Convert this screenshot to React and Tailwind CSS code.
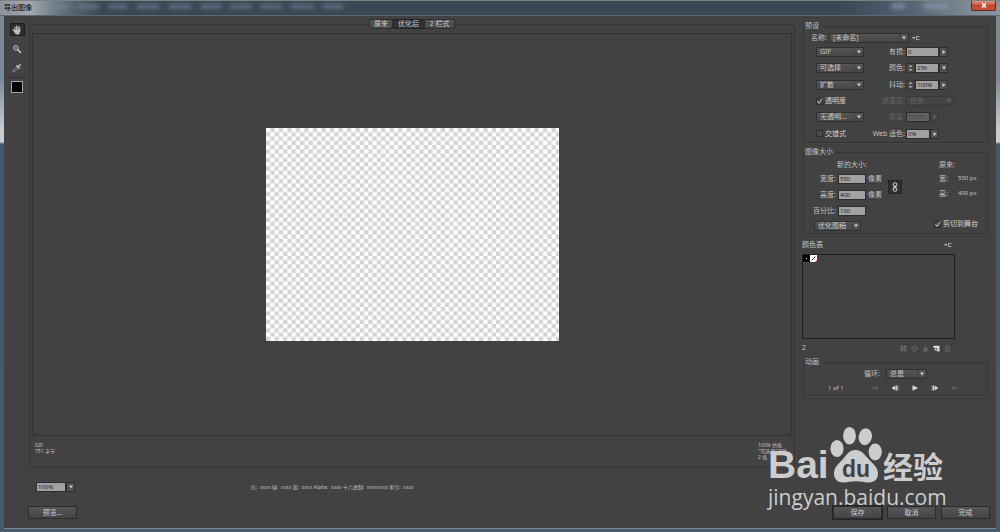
import React from "react";

const FIELD =
  "h-[10px] min-w-0 border border-[#2c2c2c] bg-[#a2a2a2] px-px font-['Open_Sans'] text-[6px] leading-[8px] text-[#151515] outline-none disabled:bg-[#606060] disabled:text-[#484848]";
const BUTTON =
  "flex h-[13px] w-[49px] items-center justify-center border border-[#2b2b2b] bg-linear-to-b from-[#565656] to-[#454545] leading-none text-[#cfcfcf]";

function Select({ id, label, value, className, disabled }) {
  return (
    <span className={`relative inline-flex h-[10px] ${className}`}>
      <select
        id={id}
        aria-label={label}
        disabled={disabled}
        className="h-full w-full appearance-none border border-[#303030] bg-linear-to-b from-[#555] to-[#474747] pl-[3px] text-[7px] leading-[8px] text-[#c8c8c8] outline-none disabled:border-[#393939] disabled:from-[#464646] disabled:to-[#424242] disabled:text-[#656565]"
      >
        <option>{value}</option>
      </select>
      <span
        className={`pointer-events-none absolute inset-y-px right-px flex w-[9px] items-center justify-center border-l ${disabled ? "border-[#404040] text-[#666]" : "border-[#424242] text-[#d0d0d0]"}`}
      >
        <Down />
      </span>
    </span>
  );
}

function Down() {
  return (
    <svg width="4" height="4" viewBox="0 0 4 4" fill="currentColor" aria-hidden="true">
      <path d="M0 .5h4L2 3.5z" />
    </svg>
  );
}

function Right() {
  return (
    <svg width="4" height="4" viewBox="0 0 4 4" fill="currentColor" aria-hidden="true">
      <path d="M.5 0v4L3.5 2z" />
    </svg>
  );
}

function ArrowButton({ label, down, disabled }) {
  return (
    <button
      type="button"
      aria-label={label}
      disabled={disabled}
      className="flex h-[10px] w-[9px] shrink-0 items-center justify-center border border-[#303030] bg-[#505050] text-[#cfcfcf] disabled:border-[#3a3a3a] disabled:bg-[#444] disabled:text-[#686868]"
    >
      {down ? <Down /> : <Right />}
    </button>
  );
}

function Spinner({ label }) {
  return (
    <button
      type="button"
      aria-label={label}
      className="flex h-[10px] w-[9px] shrink-0 items-center justify-center border border-[#333] bg-[#474747] text-[#cfcfcf]"
    >
      <svg width="5" height="8" viewBox="0 0 5 8" fill="currentColor" aria-hidden="true">
        <path d="M.7 2.8h3.6L2.5 1zM.7 5.2h3.6L2.5 7z" />
      </svg>
    </button>
  );
}

function Check({ label, checked }) {
  return (
    <label className="flex items-center gap-[2px] whitespace-nowrap text-[#d2d2d2]">
      <span className="relative flex size-[7px]">
        <input
          type="checkbox"
          defaultChecked={checked}
          className="peer size-[7px] appearance-none border border-[#2d2d2d] bg-[#4a4a4a]"
        />
        <svg
          className="pointer-events-none absolute inset-0 hidden size-[7px] overflow-visible peer-checked:block"
          viewBox="0 0 7 7"
          fill="none"
          stroke="#d8d8d8"
          strokeWidth=".9"
          aria-hidden="true"
        >
          <path d="M1.300 3.200l1.700 2L6.500.5" />
        </svg>
      </span>
      {label}
    </label>
  );
}

function MenuButton({ label }) {
  return (
    <button type="button" aria-label={label} className="flex h-[8px] w-[9px] items-center text-[#c4c4c4]">
      <svg width="9" height="6" viewBox="0 0 9 6" aria-hidden="true">
        <path d="M0 2h3.600L1.800 4z" fill="currentColor" />
        <path d="M4.500 1v4M4.500 1.500h3M4.500 4.500h3" stroke="currentColor" strokeWidth=".7" fill="none" />
      </svg>
    </button>
  );
}

function Group({ title, className, children }) {
  return (
    <fieldset className={`min-w-0 border border-[#353535] px-px shadow-[0_1px_0_#484848] ${className}`}>
      <legend className="pr-[3px] leading-[8px]">{title}</legend>
      {children}
    </fieldset>
  );
}

function OptionRow({ left, label, id, muted, children }) {
  return (
    <div className="grid grid-cols-[48px_42px_1fr] items-center">
      <div className="flex items-center">{left}</div>
      <label
        htmlFor={id}
        className={`flex justify-end pr-px whitespace-nowrap ${muted ? "text-[#626262]" : ""}`}
      >
        {label}
      </label>
      <div className="flex items-center">{children}</div>
    </div>
  );
}

function Presets() {
  return (
    <Group title="预设">
      <div className="flex h-[14px] items-center pt-[2px] pl-[6px]">
        <label htmlFor="preset" className="w-[18px] whitespace-nowrap">名称:</label>
        <Select id="preset" value="[未命名]" className="w-[80px]" />
        <span className="w-[3px]" />
        <MenuButton label="预设菜单" />
      </div>
      <div className="grid h-[98px] grid-rows-6 pl-[11px]">
        <OptionRow left={<Select label="格式" value="GIF" className="w-[48px]" />} label="有损:" id="lossy">
          <input id="lossy" defaultValue="0" className={`${FIELD} w-[33px]`} />
          <ArrowButton label="调整有损" />
        </OptionRow>
        <OptionRow left={<Select label="减色算法" value="可选择" className="w-[48px]" />} label="颜色:" id="colors">
          <Spinner label="颜色增减" />
          <input id="colors" defaultValue="256" className={`${FIELD} w-[24px]`} />
          <ArrowButton label="选择颜色数" down />
        </OptionRow>
        <OptionRow left={<Select label="仿色算法" value="扩散" className="w-[48px]" />} label="抖动:" id="dither">
          <Spinner label="抖动增减" />
          <input id="dither" defaultValue="100%" className={`${FIELD} w-[24px]`} />
          <ArrowButton label="调整抖动" />
        </OptionRow>
        <OptionRow left={<Check label="透明度" checked />} label="遮罩层:" id="matte" muted>
          <Select id="matte" value="白色" className="w-[48px]" disabled />
        </OptionRow>
        <OptionRow left={<Select label="透明仿色" value="无透明..." className="w-[48px]" />} label="数量:" id="amount" muted>
          <input id="amount" defaultValue="100%" disabled className={`${FIELD} w-[24px]`} />
          <ArrowButton label="调整数量" disabled />
        </OptionRow>
        <OptionRow left={<Check label="交错式" />} label="Web 适色:" id="websnap">
          <input id="websnap" defaultValue="0%" className={`${FIELD} w-[24px]`} />
          <ArrowButton label="调整 Web 适色" />
        </OptionRow>
      </div>
    </Group>
  );
}

function SizeRow({ id, label, value, unit }) {
  return (
    <div className="flex h-[16px] items-center">
      <label htmlFor={id} className="flex w-[33px] justify-end pr-[2px] whitespace-nowrap">{label}</label>
      <input id={id} defaultValue={value} className={`${FIELD} w-[28px]`} />
      <span className="pl-[2px]">{unit}</span>
    </div>
  );
}

function ImageSize() {
  return (
    <Group title="图像大小" className="mt-[5px]">
      <div className="flex h-[77px] pt-[2px]">
        <div className="w-[83px]">
          <div className="h-[13px] pl-[32px] leading-[13px]">新的大小:</div>
          <SizeRow id="width" label="宽度:" value="550" unit="像素" />
          <SizeRow id="height" label="高度:" value="400" unit="像素" />
          <SizeRow id="percent" label="百分比:" value="100" />
          <div className="flex h-[14px] items-center pl-[9px]">
            <Select label="品质" value="优化图稿" className="w-[47px]" />
          </div>
        </div>
        <button
          type="button"
          aria-label="约束比例"
          className="mt-[22px] flex h-[14px] w-[14px] items-center justify-center border border-[#242424] bg-[#303030] text-[#ddd]"
        >
          <svg width="6" height="10" viewBox="0 0 6 10" fill="none" stroke="currentColor" strokeWidth="1" aria-hidden="true">
            <rect x="1.2" y=".8" width="3.6" height="3.8" rx="1.6" />
            <rect x="1.2" y="5.4" width="3.6" height="3.8" rx="1.6" />
            <path d="M3 3.3v3.4" />
          </svg>
        </button>
        <div className="ml-auto flex flex-col pr-[8px]">
          <div className="h-[13px] pl-[5px] leading-[13px]">原来:</div>
          <dl className="grid grid-cols-[19px_auto] pl-[5px] leading-[15px]">
            <dt>宽:</dt>
            <dd className="text-[6px]">550 px</dd>
            <dt>高:</dt>
            <dd className="text-[6px]">400 px</dd>
          </dl>
          <div className="mt-auto pb-[5px]">
            <Check label="剪切到舞台" checked />
          </div>
        </div>
      </div>
    </Group>
  );
}

function ColorTable() {
  const icon = "flex size-[8px] items-center justify-center";
  return (
    <section className="mt-[6px] mr-[33px] -ml-px">
      <div className="flex h-[10px] items-center justify-between pr-[2px]">
        <h2>颜色表</h2>
        <MenuButton label="颜色表菜单" />
      </div>
      <div className="mt-[4px] flex h-[85px] items-start border border-[#202020]">
        <button type="button" aria-label="黑色" className="flex size-[7px] items-center justify-center bg-black">
          <span className="size-px bg-white" />
        </button>
        <button type="button" aria-label="透明" className="size-[7px] bg-white">
          <svg viewBox="0 0 7 7" className="size-[7px]" aria-hidden="true">
            <path d="M1.5 5.5l4-4" stroke="#222" strokeWidth=".9" />
            <path d="M7 5v2H5z" fill="#d22" />
          </svg>
        </button>
      </div>
      <div className="mt-[4px] flex h-[10px] items-center justify-between pr-[4px]">
        <span>2</span>
        <div className="flex items-center gap-[3px] text-[#666]">
          <button type="button" aria-label="映射为透明" className={icon}>
            <svg width="7" height="7" viewBox="0 0 7 7" aria-hidden="true">
              <rect x=".9" y=".9" width="5.2" height="5.2" fill="none" stroke="currentColor" strokeWidth=".7" />
              <path d="M1 1h2v2H1zM4 1h2v2H4zM2.5 2.5h2v2h-2zM1 4h2v2H1zM4 4h2v2H4z" fill="currentColor" />
            </svg>
          </button>
          <button type="button" aria-label="Web 转换" className={icon}>
            <svg width="7" height="7" viewBox="0 0 7 7" fill="none" stroke="currentColor" strokeWidth=".8" aria-hidden="true">
              <path d="M3.5.6l2.7 1.5v2.8L3.5 6.4.8 4.9V2.1zM.8 2.1l2.7 1.4 2.7-1.4M3.5 3.5v2.9" />
            </svg>
          </button>
          <button type="button" aria-label="锁定" className={icon}>
            <svg width="7" height="7" viewBox="0 0 7 7" aria-hidden="true">
              <path d="M1.5 3h4v3.5h-4z" fill="currentColor" />
              <path d="M2.3 3V1.9a1.2 1.2 0 0 1 2.4 0V3" fill="none" stroke="currentColor" strokeWidth=".8" />
            </svg>
          </button>
          <button type="button" aria-label="新建颜色" className={`${icon} text-[#dedede]`}>
            <svg width="7" height="7" viewBox="0 0 7 7" fill="currentColor" aria-hidden="true">
              <path d="M.5.8h6v5.7H4.3V3H.5z" />
              <path d="M.8 3.7h2.8v2.6z" />
            </svg>
          </button>
          <button type="button" aria-label="删除颜色" className={icon}>
            <svg width="7" height="7" viewBox="0 0 7 7" fill="none" stroke="currentColor" strokeWidth=".8" aria-hidden="true">
              <path d="M.8 1.9h5.4M2.5 1.8V.8h2v1M1.4 2v4.4h4.2V2M2.8 3v2.5M4.2 3v2.5" />
            </svg>
          </button>
        </div>
      </div>
    </section>
  );
}

const TRANSPORT = [
  { label: "第一帧", path: "M1.500.8h.8v4.400h-.8zM3 2.700h1v-.5L6.500.9v4.200L4 3.800v-.5H3z", off: true },
  { label: "上一帧", path: "M4.500 .6v4.800L.5 3zM5 .6h.9v4.800H5zM6.500 .6h.7v4.800h-.7z" },
  { label: "播放", path: "M1.500 .2v5.600L7 3z" },
  { label: "下一帧", path: "M3.500 .6v4.800L7.500 3zM.8 .6h.7v4.800H.8zM2.100 .6h.9v4.800h-.9z" },
  { label: "最后一帧", path: "M5.700.8h.8v4.400h-.8zM5 2.700H4v-.5L1.500.9v4.200L4 3.800v-.5h1z", off: true },
];

function Animation() {
  return (
    <Group title="动画" className="mt-[5px]">
      <div className="flex h-[15px] items-center pt-px pl-[59px]">
        <label htmlFor="loop" className="w-[22px] whitespace-nowrap">循环:</label>
        <Select id="loop" value="总是" className="w-[41px]" />
      </div>
      <div className="flex h-[14px] items-center pl-[23px]">
        <span className="w-[41px] text-[6px]">1 of 1</span>
        <div className="flex items-center gap-[8px]">
          {TRANSPORT.map((t) => (
            <button
              key={t.label}
              type="button"
              aria-label={t.label}
              className={`flex w-[12px] justify-center ${t.off ? "text-[#676767]" : "text-[#dadada]"}`}
            >
              <svg width="8" height="6" viewBox="0 0 8 6" fill="currentColor" aria-hidden="true">
                <path d={t.path} />
              </svg>
            </button>
          ))}
        </div>
      </div>
    </Group>
  );
}

function Toolbar() {
  return (
    <nav aria-label="工具" className="flex w-[25px] shrink-0 flex-col items-center pt-[7px] pl-px text-[#bdbdbd]">
      <button
        type="button"
        aria-label="抓手"
        className="flex h-[13px] w-[15px] items-center justify-center border border-[#1e1e1e] bg-[#2d2d2d]"
      >
        <svg width="10" height="10" viewBox="0 0 10 10" aria-hidden="true">
          <path
            d="M3 5.5V2M4.6 5V1M6.2 5V1.3M7.7 5.5V2.4M2.8 6.8L1 4.6"
            stroke="currentColor"
            strokeWidth="1.1"
            strokeLinecap="round"
          />
          <path d="M2.5 4.6h5.8v2L7 9.4H4L2.2 7z" fill="currentColor" />
        </svg>
      </button>
      <button type="button" aria-label="缩放" className="mt-[8px] flex size-[10px] items-center justify-center">
        <svg width="10" height="10" viewBox="0 0 10 10" aria-hidden="true">
          <circle cx="3.8" cy="3.8" r="2.5" fill="#6d6d6d" stroke="#a0a0a0" strokeWidth="1" />
          <path d="M5.900 5.900l2.500 2.500" stroke="currentColor" strokeWidth="1.7" strokeLinecap="round" />
        </svg>
      </button>
      <button type="button" aria-label="吸管" className="mt-[9px] flex size-[10px] items-center justify-center">
        <svg width="10" height="10" viewBox="0 0 10 10" aria-hidden="true">
          <path d="M1 9l.6-1.8L5.2 3.6l1.2 1.2-3.6 3.6z" fill="none" stroke="#999" strokeWidth=".8" />
          <path d="M4.9 2.900l2.300 2.300M6.200 3.800l2-2" stroke="currentColor" strokeWidth="1.6" strokeLinecap="round" />
        </svg>
      </button>
      <hr className="mt-[4px] w-[16px] border-[#333]" />
      <button type="button" aria-label="吸管颜色" className="mt-[3px] size-[12px] border border-[#a5a5a5] bg-black" />
    </nav>
  );
}

function Preview() {
  return (
    <section className="relative mt-[8px] flex min-w-0 flex-1 flex-col border border-[#373737] px-[2px] pt-[8px]">
      <div role="tablist" className="absolute -top-[6px] right-0 left-0 flex justify-center">
        <div className="flex bg-[#424242] px-px text-[#cdcdcd]">
          <button type="button" role="tab" className="h-[10px] w-[24px] border border-[#2e2e2e] bg-linear-to-b from-[#555] to-[#484848] leading-[8px]">
            原来
          </button>
          <button type="button" role="tab" aria-selected="true" className="h-[10px] w-[31px] border border-x-0 border-[#242424] bg-[#303030] leading-[8px]">
            优化后
          </button>
          <button type="button" role="tab" className="h-[10px] w-[31px] border border-[#2e2e2e] bg-linear-to-b from-[#555] to-[#484848] leading-[8px]">
            2 栏式
          </button>
        </div>
      </div>
      <div className="flex flex-1 items-center justify-center border border-[#333]">
        <svg className="w-[293px]" viewBox="0 0 550 400" role="img" aria-label="画布">
          <defs>
            <pattern id="checker" width="16" height="16" patternUnits="userSpaceOnUse">
              <rect width="16" height="16" fill="#fff" />
              <path d="M8 0h8v8H8zM0 8h8v8H0z" fill="#d4d4d4" />
            </pattern>
          </defs>
          <rect width="550" height="400" fill="url(#checker)" />
        </svg>
      </div>
      <div className="flex h-[30px] justify-between pt-[6px] pl-[3px] text-[5px] leading-[6px]">
        <div>
          <p>GIF</p>
          <p>751 字节</p>
        </div>
        <div className="w-[34px] whitespace-nowrap">
          <p>100% 仿色</p>
          <p>"可选择"调板</p>
          <p>2 色</p>
        </div>
      </div>
    </section>
  );
}

const GHOSTS = [
  "ml-[18px] w-[20px]",
  "w-[22px]",
  "w-[20px]",
  "w-[24px]",
  "w-[24px]",
  "w-[22px]",
  "w-[22px]",
  "w-[22px]",
  "w-[24px]",
  "w-[22px]",
];

function TitleBar() {
  return (
    <header className="flex h-[16px] items-start border-t border-b border-t-[#7d8186] border-b-[#5d6872] bg-[linear-gradient(90deg,#8b9198_0,#a3a9af_30px,#66727d_60px,#3a4856_100px,#3a4856_84%,#536372_91%,#7f8b96_97%,#8b959e_100%)]">
      <h1 className="pl-[4px] leading-[13px] text-black">导出图像</h1>
      <div className="flex gap-[8px] pt-[3px] blur-[2px]" aria-hidden="true">
        {GHOSTS.map((g, i) => (
          <span key={i} className={`h-[5px] rounded-full bg-[#7890a6]/50 ${g}`} />
        ))}
      </div>
      <div className="mr-[22px] ml-auto flex gap-[18px] pt-[2px] blur-[2px]" aria-hidden="true">
        <span className="h-[6px] w-[14px] bg-[#8aa0b4]/60" />
        <span className="h-[6px] w-[26px] bg-[#8aa0b4]/60" />
      </div>
      <button
        type="button"
        aria-label="关闭"
        className="mr-[4px] flex h-[10px] w-[25px] items-center justify-center rounded-b-xs border border-t-0 border-[#5e2a25] bg-linear-to-b from-[#dc9a8a] via-[#c4442e] to-[#c6523a]"
      >
        <svg width="6" height="5" viewBox="0 0 6 5" stroke="#fff" strokeWidth="1.4" aria-hidden="true">
          <path d="M1 .5l4 4M5 .5l-4 4" />
        </svg>
      </button>
    </header>
  );
}

function Watermark() {
  return (
    <div className="pointer-events-none absolute right-[54px] bottom-[20px] w-[178px] whitespace-nowrap text-[#cdcdcd]">
      <div className="flex h-[57px] items-end justify-between pr-[3px]">
        <span className="font-['Liberation_Sans'] text-[39px] leading-[36px] font-bold">Bai</span>
        <svg width="54" height="57" viewBox="0 0 54 57" className="shrink-0" fill="currentColor" aria-hidden="true">
          <ellipse cx="8" cy="22.5" rx="6.6" ry="8.6" />
          <ellipse cx="20.5" cy="9.7" rx="6.4" ry="8.8" />
          <ellipse cx="36.3" cy="10.7" rx="6.6" ry="8.500" transform="rotate(12 36.300 10.700)" />
          <ellipse cx="46.2" cy="26" rx="6.600" ry="8.400" />
          <path d="M26.500 24c6 0 8.500 4 12.500 8.500C43.500 37.500 49 41 49 47.500 49 54 44.500 56.500 39.500 56.500c-4.500 0-8-1.200-12.500-1.200s-8 1.200-12.500 1.200C9 56.500 5 53.500 5 47.500 5 41 10 37.500 14.500 32.500 18.500 28 20.500 24 26.500 24z" />
          <text x="27" y="51" textAnchor="middle" fill="#424242" fontFamily="Liberation Sans" fontWeight="700" fontSize="23">
            du
          </text>
        </svg>
        <span className="shrink-0 text-[30px] leading-[32px] font-bold">经验</span>
      </div>
      <p className="font-['Open_Sans'] text-[21px] leading-[29px] font-medium">jingyan.baidu.com</p>
    </div>
  );
}

export default function App() {
  return (
    <div className="relative flex min-h-screen flex-col bg-[#4a5b6b] font-['Noto_Sans','Noto_Sans_CJK_SC',sans-serif] text-[7px] leading-[8px] text-[#c4c4c4]">
      <TitleBar />
      <div className="flex flex-1 bg-[linear-gradient(180deg,#7c8894_0,#76879a_60px,#c9cdd1_115px,#c9cdd1_126px,#43586c_128px,#4a5b6b_100%)] px-[4px] pb-[3px]">
        <main className="flex min-w-0 flex-1 flex-col border-b border-[#7b8896] bg-[#424242]">
          <div className="flex flex-1">
            <Toolbar />
            <Preview />
            <aside className="w-[201px] shrink-0 pt-[6px] pr-[8px] pl-[8px]">
              <Presets />
              <ImageSize />
              <ColorTable />
              <Animation />
            </aside>
          </div>
          <div className="flex items-center pt-[15px] pl-[32px]">
            <input aria-label="缩放级别" defaultValue="100%" className={`${FIELD} w-[30px]`} />
            <ArrowButton label="选择缩放级别" down />
            <p className="pl-[176px] text-[5px] leading-[6px] whitespace-pre">
              红:  xxxx 绿:  xxxx 蓝:  xxxx Alpha:  xxxx 十六进制:  xxxxxxxx 索引:  xxxx
            </p>
          </div>
          <footer className="flex gap-[5px] pt-[14px] pr-[6px] pb-[9px] pl-[24px]">
            <button type="button" className={`${BUTTON} mr-auto`}>预览...</button>
            <button type="button" className={`${BUTTON} outline outline-[#262626]`}>保存</button>
            <button type="button" className={BUTTON}>取消</button>
            <button type="button" className={BUTTON}>完成</button>
          </footer>
        </main>
      </div>
      <Watermark />
    </div>
  );
}
